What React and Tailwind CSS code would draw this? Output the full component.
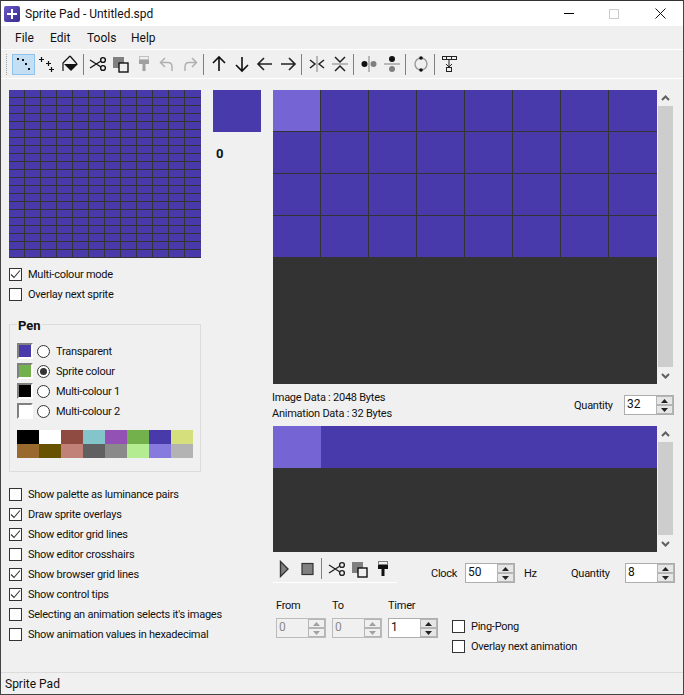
import React from 'react';

const PURPLE = 'bg-[#483aaa]';

const palette = [
  '#000000', '#ffffff', '#8f4a42', '#84c5cc', '#9351b6', '#72b14b', '#483aaa', '#d5df7c',
  '#99692d', '#675200', '#c18178', '#606060', '#8a8a8a', '#b3ec91', '#867ade', '#b3b3b3',
];

const Check = ({ label, checked }) => (
  <div className="flex items-center h-5">
    <div className="w-[13px] h-[13px] border border-[#333] bg-white flex items-center justify-center shrink-0">
      {checked && (
        <svg width="11" height="11" viewBox="0 0 11 11" fill="none">
          <path d="M1 5.5 L4 8.5 L10 1.5" stroke="#333" strokeWidth="1.1" />
        </svg>
      )}
    </div>
    <span className="ml-[6px] pt-[2px] whitespace-nowrap">{label}</span>
  </div>
);

const PenRow = ({ color, label, selected }) => (
  <div className="flex items-center h-5">
    <div className="w-4 h-4 border-2 border-t-[#808080] border-l-[#808080] border-r-white border-b-white" style={{ backgroundColor: color }} />
    <div className="ml-[4px] w-[13px] h-[13px] rounded-full border border-[#333] bg-white flex items-center justify-center">
      {selected && <div className="w-[7px] h-[7px] rounded-full bg-[#333]" />}
    </div>
    <span className="ml-[6px] pt-[2px] whitespace-nowrap">{label}</span>
  </div>
);

const Spin = ({ value, disabled }) => (
  <div className={`w-[50px] h-5 border flex ${disabled ? 'border-[#bbb] bg-[#f0f0f0] text-[#8a8a8a]' : 'border-[#adadad] bg-white'}`}>
    <span className="flex-1 pl-[2px] leading-[16px] text-[12px] tracking-normal">{value}</span>
    <div className="w-[17px] flex flex-col">
      {[0, 1].map((i) => (
        <div key={i} className={`flex-1 border border-[#b5b5b5] flex items-center justify-center ${disabled ? 'bg-[#f0f0f0]' : 'bg-[#e6e6e6]'}`}>
          <svg width="7" height="4" viewBox="0 0 7 4">
            <path d={i === 0 ? 'M3.5 0 L7 4 L0 4 Z' : 'M0 0 L7 0 L3.5 4 Z'} fill={disabled ? '#a0a0a0' : '#222'} />
          </svg>
        </div>
      ))}
    </div>
  </div>
);

const Scrollbar = () => (
  <div className="w-[17px] flex flex-col pl-px">
    <div className="h-4 w-[15px] flex items-center justify-center">
      <svg width="9" height="6" viewBox="0 0 9 6" fill="none">
        <path d="M1 5 L4.5 1.5 L8 5" stroke="#606060" strokeWidth="2" />
      </svg>
    </div>
    <div className="flex-1 w-[15px] bg-[#cdcdcd]" />
    <div className="h-[17px] w-[15px] flex items-center justify-center">
      <svg width="9" height="6" viewBox="0 0 9 6" fill="none">
        <path d="M1 1 L4.5 4.5 L8 1" stroke="#606060" strokeWidth="2" />
      </svg>
    </div>
  </div>
);

const Ico = ({ children }) => (
  <svg width="18" height="18" viewBox="0 0 18 18" fill="none">{children}</svg>
);

const icons = {
  select: (
    <Ico>
      <rect x="2" y="3" width="2" height="2" fill="#111" />
      <rect x="7" y="4" width="2" height="2" fill="#111" />
      <rect x="10" y="8" width="2" height="2" fill="#111" />
      <rect x="13" y="13" width="2" height="2" fill="#111" />
    </Ico>
  ),
  plus: (
    <Ico>
      <path d="M1 4.5H6M3.5 2V7M8 8.5H13M10.5 6V11M11 14.5H16M13.5 12V17" stroke="#111" strokeWidth="1.2" />
    </Ico>
  ),
  fill: (
    <Ico>
      <path d="M9 1 L2 8 V16" stroke="#111" strokeWidth="1.2" />
      <path d="M9 1 L16 9" stroke="#111" strokeWidth="1.2" />
      <path d="M3 9 H17 L10 16 Z" fill="#111" />
    </Ico>
  ),
  scissors: (c = '#111') => (
    <Ico>
      <circle cx="14" cy="5" r="2.4" stroke={c} strokeWidth="1.4" />
      <circle cx="14" cy="13" r="2.4" stroke={c} strokeWidth="1.4" />
      <path d="M1 5 L12 12 M1 13 L12 6" stroke={c} strokeWidth="1.3" />
    </Ico>
  ),
  copy: (
    <Ico>
      <rect x="1" y="2" width="11" height="11" fill="#808080" />
      <rect x="7" y="8" width="9" height="9" fill="#f0f0f0" stroke="#111" strokeWidth="1.4" />
    </Ico>
  ),
  paste: (c = '#a0a0a0', top = '#c0c0c0') => (
    <Ico>
      <rect x="4.5" y="1.5" width="9" height="3" fill="#f0f0f0" stroke={top} />
      <rect x="4" y="5" width="10" height="4" fill={c} />
      <rect x="7.5" y="9" width="3" height="7" fill={c} />
    </Ico>
  ),
  undo: (
    <Ico>
      <path d="M7 3 L2.5 7.5 L7 12 M3 7.5 H10 Q14 7.5 14 12 V16" stroke="#b0b0b0" strokeWidth="1.5" />
    </Ico>
  ),
  redo: (
    <Ico>
      <path d="M11 3 L15.5 7.5 L11 12 M15 7.5 H8 Q4 7.5 4 12 V16" stroke="#b0b0b0" strokeWidth="1.5" />
    </Ico>
  ),
  up: (
    <Ico>
      <path d="M3 8 L9 2 L15 8 M9 2.5 V16" stroke="#111" strokeWidth="1.6" />
    </Ico>
  ),
  down: (
    <Ico>
      <path d="M3 10 L9 16 L15 10 M9 15.5 V2" stroke="#111" strokeWidth="1.6" />
    </Ico>
  ),
  left: (
    <Ico>
      <path d="M8 3 L2 9 L8 15 M2.5 9 H16" stroke="#222" strokeWidth="1.6" />
    </Ico>
  ),
  right: (
    <Ico>
      <path d="M10 3 L16 9 L10 15 M15.5 9 H2" stroke="#222" strokeWidth="1.6" />
    </Ico>
  ),
  flipH: (
    <Ico>
      <path d="M2 5 L7 9 L2 13 M16 5 L11 9 L16 13" stroke="#222" strokeWidth="1.5" />
      <path d="M9 1 V17" stroke="#808080" />
    </Ico>
  ),
  flipV: (
    <Ico>
      <path d="M4 2 L9 7 L14 2 M4 16 L9 11 L14 16" stroke="#222" strokeWidth="1.5" />
      <path d="M1 9 H17" stroke="#808080" />
    </Ico>
  ),
  dotsH: (
    <Ico>
      <circle cx="4.5" cy="9" r="3" fill="#111" />
      <circle cx="13.5" cy="9" r="3" fill="#808080" />
      <path d="M9 1 V17" stroke="#808080" />
    </Ico>
  ),
  dotsV: (
    <Ico>
      <circle cx="9" cy="4" r="3" fill="#111" />
      <circle cx="9" cy="14" r="3" fill="#808080" />
      <path d="M1 9 H17" stroke="#808080" />
    </Ico>
  ),
  rotate: (
    <Ico>
      <circle cx="9" cy="9" r="6" stroke="#9a9a9a" strokeWidth="1.4" />
      <circle cx="9" cy="3" r="1.8" fill="#111" />
      <circle cx="9" cy="15" r="1.8" fill="#111" />
    </Ico>
  ),
  tree: (
    <Ico>
      <rect x="1.5" y="1.5" width="4" height="3" stroke="#222" />
      <rect x="5.5" y="1.5" width="5" height="3" stroke="#222" />
      <rect x="10.5" y="1.5" width="5" height="3" stroke="#222" />
      <path d="M8 5 V12 M5 9 L8 12 L11 9" stroke="#222" />
      <rect x="5.5" y="12.5" width="5" height="4" stroke="#222" />
    </Ico>
  ),
  play: (
    <Ico>
      <path d="M4.5 1.5 L12 9 L4.5 16.5 Z" fill="#808080" stroke="#333" strokeWidth="1.4" />
    </Ico>
  ),
  stop: (
    <Ico>
      <rect x="3" y="3.5" width="11" height="11" fill="#808080" stroke="#333" strokeWidth="1.2" />
    </Ico>
  ),
};

const Btn = ({ children, active }) => (
  <div className={`w-[23px] h-[21px] flex items-center justify-center shrink-0 ${active ? 'bg-[#c4dff4] border border-[#8cc4ee]' : ''}`}>
    {children}
  </div>
);

const Sep = ({ w = 'w-[6px]' }) => (
  <div className={`${w} h-[21px] shrink-0 pl-[2px]`}>
    <div className="w-px h-full bg-[#808080]" />
  </div>
);

export default function App() {
  return (
    <div
      className="w-[684px] h-[695px] flex flex-col bg-[#f0f0f0] border-x border-b border-t border-x-[#444] border-b-[#444] border-t-[#333] text-[11px] tracking-[-0.25px] text-[#111] overflow-hidden"
      style={{ fontFamily: 'Roboto, "Noto Sans", sans-serif' }}
    >
      {/* title bar */}
      <div className="h-[25px] bg-white flex items-center shrink-0 text-[12px] tracking-normal">
        <div className="ml-[3px] w-4 h-4 rounded-[2px] bg-gradient-to-br from-[#6a5ac8] to-[#3a2a90] flex items-center justify-center">
          <svg width="10" height="10" viewBox="0 0 10 10">
            <path d="M4 0H6V4H10V6H6V10H4V6H0V4H4Z" fill="#fff" />
          </svg>
        </div>
        <span className="ml-[5px]">Sprite Pad - Untitled.spd</span>
        <div className="ml-auto flex items-center">
          <div className="w-[10px] h-px bg-black" />
          <div className="ml-[35px] w-[10px] h-[10px] border border-[#ccc]" />
          <svg className="ml-[36px] mr-[17px]" width="11" height="11" viewBox="0 0 11 11">
            <path d="M0.5 0.5 L10.5 10.5 M10.5 0.5 L0.5 10.5" stroke="#111" />
          </svg>
        </div>
      </div>

      {/* menu */}
      <div className="h-[23px] flex items-center shrink-0 pl-[14px] text-[12px] tracking-normal">
        <span className="w-[35px]">File</span>
        <span className="w-[37px]">Edit</span>
        <span className="w-[44px]">Tools</span>
        <span>Help</span>
      </div>

      {/* toolbar */}
      <div className="h-[30px] shrink-0 border-y border-white flex items-center pl-[5px]">
        <div className="w-[5px] h-[21px] mr-[1px] border-l border-dotted border-[#a0a0a0]" />
        <Btn active>{icons.select}</Btn>
        <Btn>{icons.plus}</Btn>
        <Btn>{icons.fill}</Btn>
        <Sep w="w-[5px]" />
        <Btn>{icons.scissors()}</Btn>
        <Btn>{icons.copy}</Btn>
        <Btn>{icons.paste()}</Btn>
        <Btn>{icons.undo}</Btn>
        <Btn>{icons.redo}</Btn>
        <Sep />
        <Btn>{icons.up}</Btn>
        <Btn>{icons.down}</Btn>
        <Btn>{icons.left}</Btn>
        <Btn>{icons.right}</Btn>
        <Sep />
        <Btn>{icons.flipH}</Btn>
        <Btn>{icons.flipV}</Btn>
        <Sep />
        <Btn>{icons.dotsH}</Btn>
        <Btn>{icons.dotsV}</Btn>
        <Sep />
        <Btn>{icons.rotate}</Btn>
        <Sep />
        <Btn>{icons.tree}</Btn>
      </div>

      {/* main */}
      <div className="flex-1 flex min-h-0">
        {/* left column */}
        <div className="w-[272px] shrink-0 pl-2 pt-[11px]">
          <div className="flex">
            <div className={`w-[192px] h-[168px] grid grid-cols-12 ${PURPLE}`}>
              {Array.from({ length: 252 }).map((_, i) => (
                <div key={i} className={`h-2 border-b border-[#333] ${i % 12 !== 11 ? 'border-r' : ''}`} />
              ))}
            </div>
            <div className="ml-3">
              <div className={`w-12 h-[42px] ${PURPLE}`} />
              <div className="mt-3 ml-[3px] font-bold text-[13px]">0</div>
            </div>
          </div>

          <div className="mt-[6px]">
            <Check label="Multi-colour mode" checked />
            <Check label="Overlay next sprite" />
          </div>

          {/* pen group */}
          <div className="relative mt-5 w-[192px] h-[148px] border border-[#dcdcdc] pl-[7px] pt-4">
            <span className="absolute left-[7px] -top-[9px] bg-[#f0f0f0] px-px font-bold text-[13px] tracking-normal">Pen</span>
            <PenRow color="#483aaa" label="Transparent" />
            <PenRow color="#72b14b" label="Sprite colour" selected />
            <PenRow color="#000000" label="Multi-colour 1" />
            <PenRow color="#ffffff" label="Multi-colour 2" />
            <div className="mt-[9px] grid grid-cols-8 w-[176px]">
              {palette.map((c) => (
                <div key={c} className="h-[14px]" style={{ backgroundColor: c }} />
              ))}
            </div>
          </div>

          <div className="mt-3">
            <Check label="Show palette as luminance pairs" />
            <Check label="Draw sprite overlays" checked />
            <Check label="Show editor grid lines" checked />
            <Check label="Show editor crosshairs" />
            <Check label="Show browser grid lines" checked />
            <Check label="Show control tips" checked />
            <Check label="Selecting an animation selects it's images" />
            <Check label="Show animation values in hexadecimal" />
          </div>
        </div>

        {/* right column */}
        <div className="flex-1 pt-[11px] min-w-0">
          <div className="flex h-[294px]">
            <div className="w-[384px] bg-[#333]">
              <div className={`grid grid-cols-8 ${PURPLE}`}>
                {Array.from({ length: 32 }).map((_, i) => (
                  <div key={i} className={`h-[42px] border-b border-[#333] ${i % 8 !== 7 ? 'border-r' : ''} ${i === 0 ? 'bg-[#7464d4]' : ''}`} />
                ))}
              </div>
            </div>
            <Scrollbar />
          </div>

          <div className="h-[42px] flex items-center -ml-px">
            <div className="leading-4 pt-[2px]">
              <div>Image Data : 2048 Bytes</div>
              <div>Animation Data : 32 Bytes</div>
            </div>
            <div className="ml-auto flex items-center mr-[9px]">
              <span className="w-[50px] pt-[2px]">Quantity</span>
              <Spin value="32" />
            </div>
          </div>

          <div className="flex h-[126px]">
            <div className="w-[384px] bg-[#333]">
              <div className={`h-[42px] ${PURPLE}`}>
                <div className="w-12 h-full bg-[#7464d4]" />
              </div>
            </div>
            <Scrollbar />
          </div>

          <div className="mt-[6px] flex items-start">
            <div className="w-[124px] h-[25px] border-b border-white flex items-start">
              <Btn>{icons.play}</Btn>
              <Btn>{icons.stop}</Btn>
              <Sep />
              <Btn>{icons.scissors('#222')}</Btn>
              <Btn>{icons.copy}</Btn>
              <Btn>{icons.paste('#111', '#808080')}</Btn>
            </div>
            <div className="ml-[34px] mt-[5px] flex items-center">
              <span className="w-[34px] pt-[2px]">Clock</span>
              <Spin value="50" />
              <span className="ml-[9px] w-[47px] pt-[2px]">Hz</span>
              <span className="w-[54px] pt-[2px]">Quantity</span>
              <Spin value="8" />
            </div>
          </div>

          <div className="mt-[15px] ml-[3px] flex items-start">
            <div className="flex gap-[6px]">
              {[['From', '0', true], ['To', '0', true], ['Timer', '1', false]].map(([l, v, d]) => (
                <div key={l}>
                  <div className="h-[15px] leading-[15px]">{l}</div>
                  <div className="mt-[5px]"><Spin value={v} disabled={d} /></div>
                </div>
              ))}
            </div>
            <div className="ml-[14px] mt-[18px]">
              <Check label="Ping-Pong" />
              <Check label="Overlay next animation" />
            </div>
          </div>
        </div>
      </div>

      {/* status */}
      <div className="h-[22px] shrink-0 border-t border-[#dcdcdc] pl-1 flex items-center text-[12px] tracking-normal">Sprite Pad</div>
    </div>
  );
}
